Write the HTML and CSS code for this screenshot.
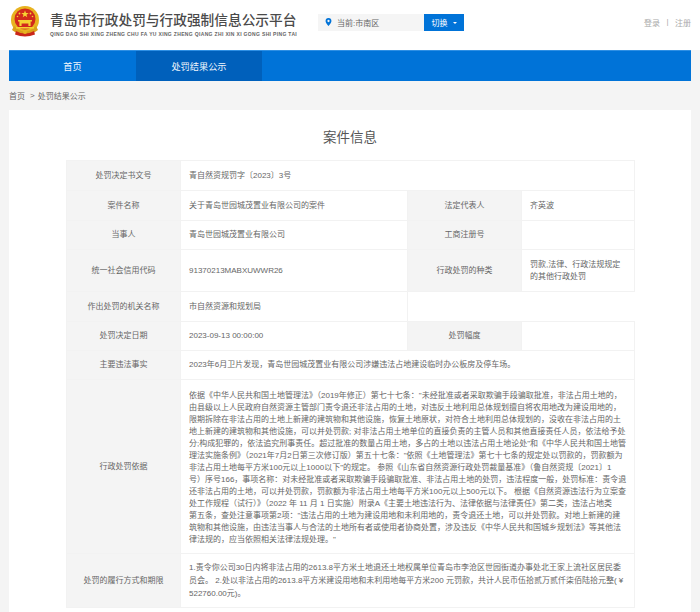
FILE: index.html
```html
<!DOCTYPE html>
<html lang="zh-CN">
<head>
<meta charset="utf-8">
<title>案件信息</title>
<link rel="stylesheet" href="styles.css">
</head>
<body>
<header class="top">
  <svg class="emblem" viewBox="0 0 30 32" aria-hidden="true">
    <circle cx="15" cy="14" r="14" fill="#e8b320"/>
    <path d="M4 20 Q15 31 26 20 L28 24 Q15 34 2 24Z" fill="#d9a11b"/>
    <circle cx="15" cy="13" r="10.5" fill="#d22a1c"/>
    <path d="M15 4.5l1 2.6h2.7l-2.2 1.6.8 2.6-2.3-1.6-2.3 1.6.8-2.6-2.2-1.6H14z" fill="#f6d232"/>
    <circle cx="9.5" cy="7.5" r=".9" fill="#f6d232"/><circle cx="20.5" cy="7.5" r=".9" fill="#f6d232"/>
    <circle cx="7.5" cy="10.5" r=".8" fill="#f6d232"/><circle cx="22.5" cy="10.5" r=".8" fill="#f6d232"/>
    <path d="M8 14h14v1.4h-1.4V20h-2.2v-2.5h-6.8V20H9.4v-4.6H8z" fill="#f6d232"/>
    <path d="M6 21h18v1.6H6z" fill="#f6d232"/>
    <path d="M6 25q9 5 18 0l1 3.6q-10 4-20 0z" fill="#c9261a"/>
    <circle cx="15" cy="26" r="2" fill="#e8b320"/>
  </svg>
  <div class="brand">
    <h1 class="brand-name">青岛市行政处罚与行政强制信息公示平台</h1>
    <p class="brand-pinyin">QING DAO SHI XING ZHENG CHU FA YU XING ZHENG QIANG ZHI XIN XI GONG SHI PING TAI</p>
  </div>
  <div class="loc">
    <svg class="pin" viewBox="0 0 10 12" aria-hidden="true"><path fill-rule="evenodd" d="M5 0a4.4 4.4 0 0 1 4.4 4.4C9.4 7.4 5 12 5 12S.6 7.4.6 4.4A4.4 4.4 0 0 1 5 0zm0 2.8a1.7 1.7 0 1 0 0 3.4 1.7 1.7 0 0 0 0-3.4z" fill="#0073d8"/></svg>
    <span>当前:市南区</span>
  </div>
  <button class="switch" type="button">切换<i class="caret"></i></button>
  <div class="auth"><span>登录</span><span class="sep">|</span><span>注册</span></div>
</header>

<nav class="nav">
  <a class="nav-item">首页</a>
  <a class="nav-item is-active">处罚结果公示</a>
</nav>

<div class="crumb">首页<span class="crumb-sep">&gt;</span>处罚结果公示</div>

<main class="card">
  <h2 class="card-title">案件信息</h2>
  <table class="info">
    <colgroup><col class="c-l"><col class="c-v"><col class="c-l"><col class="c-v2"></colgroup>
    <tr class="r30"><th>处罚决定书文号</th><td colspan="3">青自然资规罚字〔2023〕3号</td></tr>
    <tr class="r30"><th>案件名称</th><td>关于青岛世园城茂置业有限公司的案件</td><th>法定代表人</th><td>齐英波</td></tr>
    <tr class="r29"><th>当事人</th><td>青岛世园城茂置业有限公司</td><th>工商注册号</th><td></td></tr>
    <tr class="r42"><th>统一社会信用代码</th><td>91370213MABXUWWR26</td><th>行政处罚的种类</th><td>罚款,法律、行政法规规定的其他行政处罚</td></tr>
    <tr class="r30"><th>作出处罚的机关名称</th><td>市自然资源和规划局</td><td class="blank" colspan="2"></td></tr>
    <tr class="r29"><th>处罚决定日期</th><td>2023-09-13 00:00:00</td><th>处罚幅度</th><td></td></tr>
    <tr class="r29"><th>主要违法事实</th><td colspan="3">2023年6月卫片发现，青岛世园城茂置业有限公司涉嫌违法占地建设临时办公板房及停车场。</td></tr>
    <tr class="r174"><th>行政处罚依据</th><td class="lines basis" colspan="3">依据《中华人民共和国土地管理法》（2019年修正）第七十七条："未经批准或者采取欺骗手段骗取批准，非法占用土地的，<br>由县级以上人民政府自然资源主管部门责令退还非法占用的土地，对违反土地利用总体规划擅自将农用地改为建设用地的，<br>限期拆除在非法占用的土地上新建的建筑物和其他设施，恢复土地原状，对符合土地利用总体规划的，没收在非法占用的土<br>地上新建的建筑物和其他设施，可以并处罚款; 对非法占用土地单位的直接负责的主管人员和其他直接责任人员，依法给予处<br>分;构成犯罪的，依法追究刑事责任。超过批准的数量占用土地，多占的土地以违法占用土地论处"和《中华人民共和国土地管<br>理法实施条例》（2021年7月2日第三次修订版）第五十七条："依照《土地管理法》第七十七条的规定处以罚款的，罚款额为<br>非法占用土地每平方米100元以上1000以下"的规定。 参照《山东省自然资源行政处罚裁量基准》（鲁自然资规〔2021〕1<br>号）序号166，事项名称：对未经批准或者采取欺骗手段骗取批准、非法占用土地的处罚，违法程度一般，处罚标准：责令退<br>还非法占用的土地，可以并处罚款，罚款额为非法占用土地每平方米100元以上500元以下。 根据《自然资源违法行为立案查<br>处工作规程（试行）》（2022 年 11 月 1 日实施）附录A《主要土地违法行为、法律依据与法律责任》第二类，违法占地类<br>第五条，查处注意事项第2项："违法占用的土地为建设用地和未利用地的，责令退还土地，可以并处罚款。对地上新建的建<br>筑物和其他设施，由违法当事人与合法的土地所有者或使用者协商处置，涉及违反《中华人民共和国城乡规划法》等其他法<br>律法规的，应当依照相关法律法规处理。"</td></tr>
    <tr class="r54"><th>处罚的履行方式和期限</th><td class="lines terms" colspan="3">1.责令你公司30日内将非法占用的2613.8平方米土地退还土地权属单位青岛市李沧区世园街道办事处北王家上流社区居民委<br>员会。 2.处以非法占用的2613.8平方米建设用地和未利用地每平方米200 元罚款，共计人民币伍拾贰万贰仟柒佰陆拾元整( ¥<br>522760.00元)。</td></tr>
  </table>
</main>
</body>
</html>
```
FILE: styles.css
```css
* { box-sizing: border-box; }
html, body { margin: 0; padding: 0; }
body {
  width: 700px;
  height: 612px;
  overflow: hidden;
  background: #f4f4f4;
  color: #666;
  font-family: "Liberation Sans", "Noto Sans CJK SC", sans-serif;
  font-size: 8px;
}
.top {
  display: flex;
  align-items: center;
  height: 50px;
  padding-left: 10px;
  background: #fff;
}
.emblem { width: 30px; height: 32px; flex: none; margin-top: -6px; }
.brand { width: 268px; margin-left: 10px; margin-top: -3px; }
.brand-name {
  margin: 0;
  font-size: 13.7px;
  line-height: 20px;
  font-weight: 500;
  color: #4a4a4a;
  white-space: nowrap;
}
.brand-pinyin {
  margin: 0;
  font-size: 5px;
  line-height: 6px;
  letter-spacing: .34px;
  font-weight: 700;
  color: #666;
  white-space: nowrap;
}
.loc {
  display: flex;
  align-items: center;
  width: 106px;
  height: 17px;
  margin-top: -6px;
  padding-left: 7px;
  background: #f5f5f5;
  color: #666;
}
.pin { width: 7px; height: 8px; margin-right: 5px; }
.switch {
  display: flex;
  align-items: center;
  justify-content: center;
  width: 40px;
  height: 17px;
  margin-top: -6px;
  border: 0;
  padding: 0;
  background: #0073d8;
  color: #fff;
  font: inherit;
}
.caret {
  width: 0;
  height: 0;
  margin: 2px 0 0 5px;
  border: 2px solid transparent;
  border-top-color: #fff;
  border-bottom-width: 0;
}
.auth { display: flex; margin-left: auto; margin-right: 9px; margin-top: -6px; color: #aaa; }
.sep { margin: 0 6.5px; }
.nav {
  display: flex;
  height: 31px;
  margin: 0 9px;
  background: #0073d8;
  border-top: 1px solid #2e8fe4;
}
.nav-item {
  display: flex;
  align-items: center;
  justify-content: center;
  width: 127px;
  color: #f0f6fc;
  font-size: 9.2px;
}
.nav-item.is-active { width: 126px; background: #0060bb; }
.crumb {
  display: flex;
  align-items: center;
  height: 29px;
  padding-left: 9px;
  color: #666;
}
.crumb-sep { margin: 0 3px 0 5px; }
.card {
  margin: 0 9px;
  height: 502px;
  padding: 0 57px;
  background: #fff;
  overflow: hidden;
}
.card-title {
  margin: 0;
  height: 50px;
  padding-top: 18px;
  text-align: center;
  font-size: 13.5px;
  line-height: 20px;
  font-weight: 400;
  color: #555;
}
.info {
  width: 568px;
  table-layout: fixed;
  border-collapse: collapse;
  line-height: 12px;
}
.c-l { width: 114px; }
.c-v { width: 227px; }
.c-v2 { width: 113px; }
.info th, .info td { border: 1px solid #f2f2f2; padding: 0; }
.info th {
  background: #f4f4f4;
  font-weight: 400;
  text-align: center;
  color: #666;
}
.info td { padding: 0 8px; color: #666; }
.info td.lines { white-space: nowrap; }
.info td.basis { padding-top: 2px; }
.info td.terms { line-height: 13px; }
.info td.blank { border-right: 0; border-top: 0; }
.r30 { height: 30px; }
.r29 { height: 29px; }
.r42 { height: 42px; }
.r54 { height: 54px; }
.r174 { height: 174px; }
```
